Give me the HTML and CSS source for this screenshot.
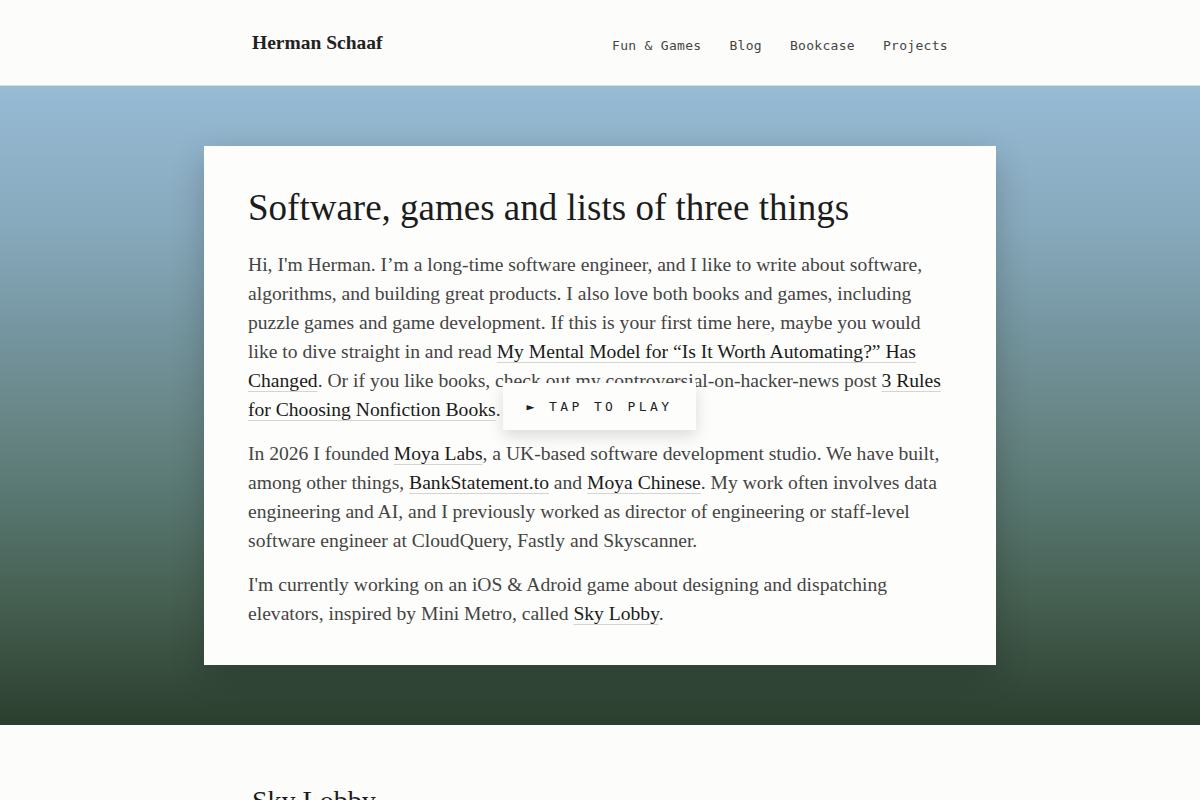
FILE: index.html
```html
<!DOCTYPE html>
<html lang="en">
<head>
<meta charset="utf-8">
<title>Herman Schaaf</title>
<link rel="stylesheet" href="styles.css">
</head>
<body>
<header class="site-header">
  <div class="header-inner">
    <a class="logo" href="#">Herman Schaaf</a>
    <nav class="nav">
      <a href="#">Fun &amp; Games</a>
      <a href="#">Blog</a>
      <a href="#">Bookcase</a>
      <a href="#">Projects</a>
    </nav>
  </div>
</header>
<section class="hero">
  <div class="card">
    <h1>Software, games and lists of three things</h1>
    <p>Hi, I'm Herman. I’m a long-time software engineer, and I like to write about software, algorithms, and building great products. I also love both books and games, including puzzle games and game development. If this is your first time here, maybe you would like to dive straight in and read <a href="#">My Mental Model for “Is It Worth Automating?” Has Changed</a>. Or if you like books, check out my controversial-on-hacker-news post <a href="#">3 Rules for Choosing Nonfiction Books</a>.</p>
    <p>In 2026 I founded <a href="#">Moya Labs</a>, a UK-based software development studio. We have built, among other things, <a href="#">BankStatement.to</a> and <a href="#">Moya Chinese</a>. My work often involves data engineering and AI, and I previously worked as director of engineering or staff-level software engineer at CloudQuery, Fastly and Skyscanner.</p>
    <p>I'm currently working on an iOS &amp; Adroid game about designing and dispatching elevators, inspired by Mini Metro, called <a href="#">Sky Lobby</a>.</p>
    <button class="tap">► TAP TO PLAY</button>
  </div>
</section>
<section class="below">
  <h2>Sky Lobby</h2>
</section>
</body>
</html>
```
FILE: styles.css
```css
* { box-sizing: border-box; }
html, body { margin: 0; padding: 0; }
body {
  background: #fcfcfa;
  font-family: "Liberation Serif", "DejaVu Serif", serif;
  color: #444;
}
.site-header {
  height: 86px;
  border-bottom: 1px solid #dcdcd8;
  background: #fcfcfa;
}
.header-inner {
  width: 696px;
  margin: 0 auto;
  height: 85px;
  display: flex;
  align-items: center;
  justify-content: space-between;
}
.logo {
  font-family: "Liberation Serif", serif;
  font-weight: 700;
  font-size: 19.5px;
  color: #222;
  text-decoration: none;
}
.nav {
  display: flex;
  gap: 28px;
  padding-top: 6px;
}
.nav a {
  font-family: "DejaVu Sans Mono", monospace;
  font-size: 13px;
  letter-spacing: 0.3px;
  color: #444;
  text-decoration: none;
}
.hero {
  height: 639px;
  padding-top: 60px;
  background: linear-gradient(180deg, #98bbd6 0%, #87a9bc 22%, #7596a0 38%, #688686 52%, #587670 65%, #466052 80%, #2b3e2e 100%);
}
.card {
  position: relative;
  width: 792px;
  margin: 0 auto;
  background: #fdfdfb;
  padding: 38px 44px 22px 44px;
  box-shadow: 0 10px 32px rgba(0,0,0,0.2);
}
.card h1 {
  margin: 0 0 18px 0;
  font-family: "Liberation Serif", serif;
  font-weight: 400;
  font-size: 37px;
  line-height: 48px;
  color: #1c1c1c;
}
.card p {
  margin: 0 0 15px 0;
  font-size: 19.6px;
  line-height: 29px;
  color: #444;
}
.card a {
  color: #1a1a1a;
  text-decoration: underline;
  text-decoration-color: #d4d4d0;
  text-decoration-thickness: 1px;
  text-underline-offset: 4px;
}
.tap {
  position: absolute;
  left: 299px;
  top: 237px;
  width: 193px;
  height: 47px;
  border: 0;
  background: #fdfdfb;
  box-shadow: 0 6px 16px rgba(0,0,0,0.14);
  font-family: "DejaVu Sans Mono", monospace;
  font-size: 13px;
  letter-spacing: 3.4px;
  color: #222;
  padding: 0;
}
.below {
  width: 696px;
  margin: 0 auto;
  padding-top: 60px;
}
.below h2 {
  margin: 0;
  font-family: "Liberation Serif", serif;
  font-weight: 400;
  font-size: 28px;
  color: #1c1c1c;
}
```
